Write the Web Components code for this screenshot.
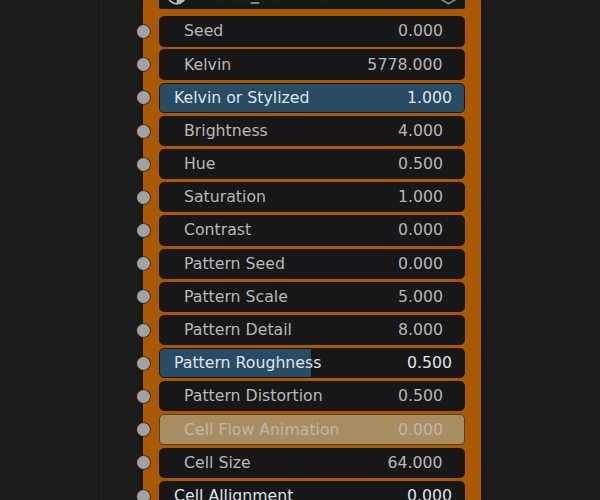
<!DOCTYPE html>
<html lang="en"><head><meta charset="utf-8"><title>Node editor</title>
<style>html,body{margin:0;background:#1c1c1c}body{width:600px;height:500px;overflow:hidden}</style></head><body>
<node-canvas><shader-node></shader-node></node-canvas>
<script>
class NodeCanvas extends HTMLElement{
 constructor(){super();this.attachShadow({mode:'open'}).innerHTML=`<style>
 :host{display:block;box-sizing:border-box;width:600px;height:500px;overflow:hidden;padding-left:143.3px;background:
 linear-gradient(#161616,#161616) 98px 0/1px 100% no-repeat,
 linear-gradient(#191919,#191919) 551px 0/1px 100% no-repeat,
 linear-gradient(#181818,#181818) 0 51px/100% 1px no-repeat,
 linear-gradient(#181818,#181818) 0 202px/100% 1px no-repeat,
 linear-gradient(#181818,#181818) 0 352px/100% 1px no-repeat,
 linear-gradient(#1b1b1b,#1b1b1b) 68px 0/1px 100% no-repeat,
 linear-gradient(#1b1b1b,#1b1b1b) 520px 0/1px 100% no-repeat,#1c1c1c}
 </style><slot></slot>`}}
customElements.define('node-canvas',NodeCanvas);

class NodeHeader extends HTMLElement{
 constructor(){super();this.attachShadow({mode:'open'}).innerHTML=`<style>
 :host{display:block;height:9.3px;background:#171717;border-radius:0 0 2px 2px;overflow:hidden}
 svg{display:block}
 </style><svg width="306" height="9"><circle cx="17.7" cy="-5" r="8.8" fill="#171717" stroke="#b5b5b5" stroke-width="1.7"/><path d="M17.7-5V4.2A9.2 9.2 0 0 0 26.9-5Z" fill="#b9b9b9"/><path d="M282.5-.5l7 4.3L296.500-.5" fill="none" stroke="#858585" stroke-width="1.6"/><path d="M91.8 3h8.4" stroke="#a8a8a8" stroke-width="1.6"/><path d="M61 .5h4m8 0h4m3 0h5m18 0h4m8 0h4m41 0h5" stroke="#202020"/></svg>`}}
customElements.define('node-header',NodeHeader);

class SocketRow extends HTMLElement{
 connectedCallback(){const k=this.getAttribute('kind')||'plain',f=this.getAttribute('fill')||'0';
 this.attachShadow({mode:'open'}).innerHTML=`<style>
 :host{display:block;position:relative;height:30.3px}
 .field{box-sizing:border-box;height:100%;border-radius:5px;border:1px solid #1b150e;background:linear-gradient(90deg,#294b64 ${f}%,#171717 ${f}%);display:flex;justify-content:space-between;align-items:center;padding:0 20.8px 0 23.6px;color:#b7b7b7;font:16.45px/30px "DejaVu Sans",sans-serif;white-space:nowrap}
 .slider{padding:0 11.3px 0 14.5px;color:#dfe5e8}
 .active{background:#a88d62;border-color:#54401f;color:#c0b6a8}
 ::slotted(*){transform:translateY(.3px) scaleX(.957);transform-origin:0 50%}
 ::slotted([slot=value]){transform-origin:100% 50%}
 .socket{position:absolute;left:-22.3px;top:8.8px;width:13px;height:13px;border-radius:50%;background:#a1a1a1;box-shadow:0 0 0 .8px #302820}
 </style><span class="socket"></span><div class="field ${k}"><slot></slot><slot name="value"></slot></div>`}}
customElements.define('socket-row',SocketRow);

class ShaderNode extends HTMLElement{
 constructor(){super();const rows=[['Seed','0.000'],['Kelvin','5778.000'],['Kelvin or Stylized','1.000','slider',100],['Brightness','4.000'],['Hue','0.500'],['Saturation','1.000'],['Contrast','0.000'],['Pattern Seed','0.000'],['Pattern Scale','5.000'],['Pattern Detail','8.000'],['Pattern Roughness','0.500','slider',49.6],['Pattern Distortion','0.500'],['Cell Flow Animation','0.000','active'],['Cell Size','64.000'],['Cell Allignment','0.000','slider',0]];
 this.attachShadow({mode:'open'}).innerHTML=`<style>
 :host{display:block;box-sizing:border-box;width:337.4px;height:560px;padding:0 16px 0 15.7px;background:#a95804;box-shadow:0 0 0 .6px #20180f,0 0 7px 1px #111517}
 .rows{display:grid;gap:2.89px;padding-top:7px}
 </style><node-header></node-header><div class="rows">${rows.map(([n,v,k='plain',f=0])=>`<socket-row kind="${k}" fill="${f}"><span>${n}</span><span slot="value">${v}</span></socket-row>`).join('')}</div>`}}
customElements.define('shader-node',ShaderNode);
</script></body></html>
